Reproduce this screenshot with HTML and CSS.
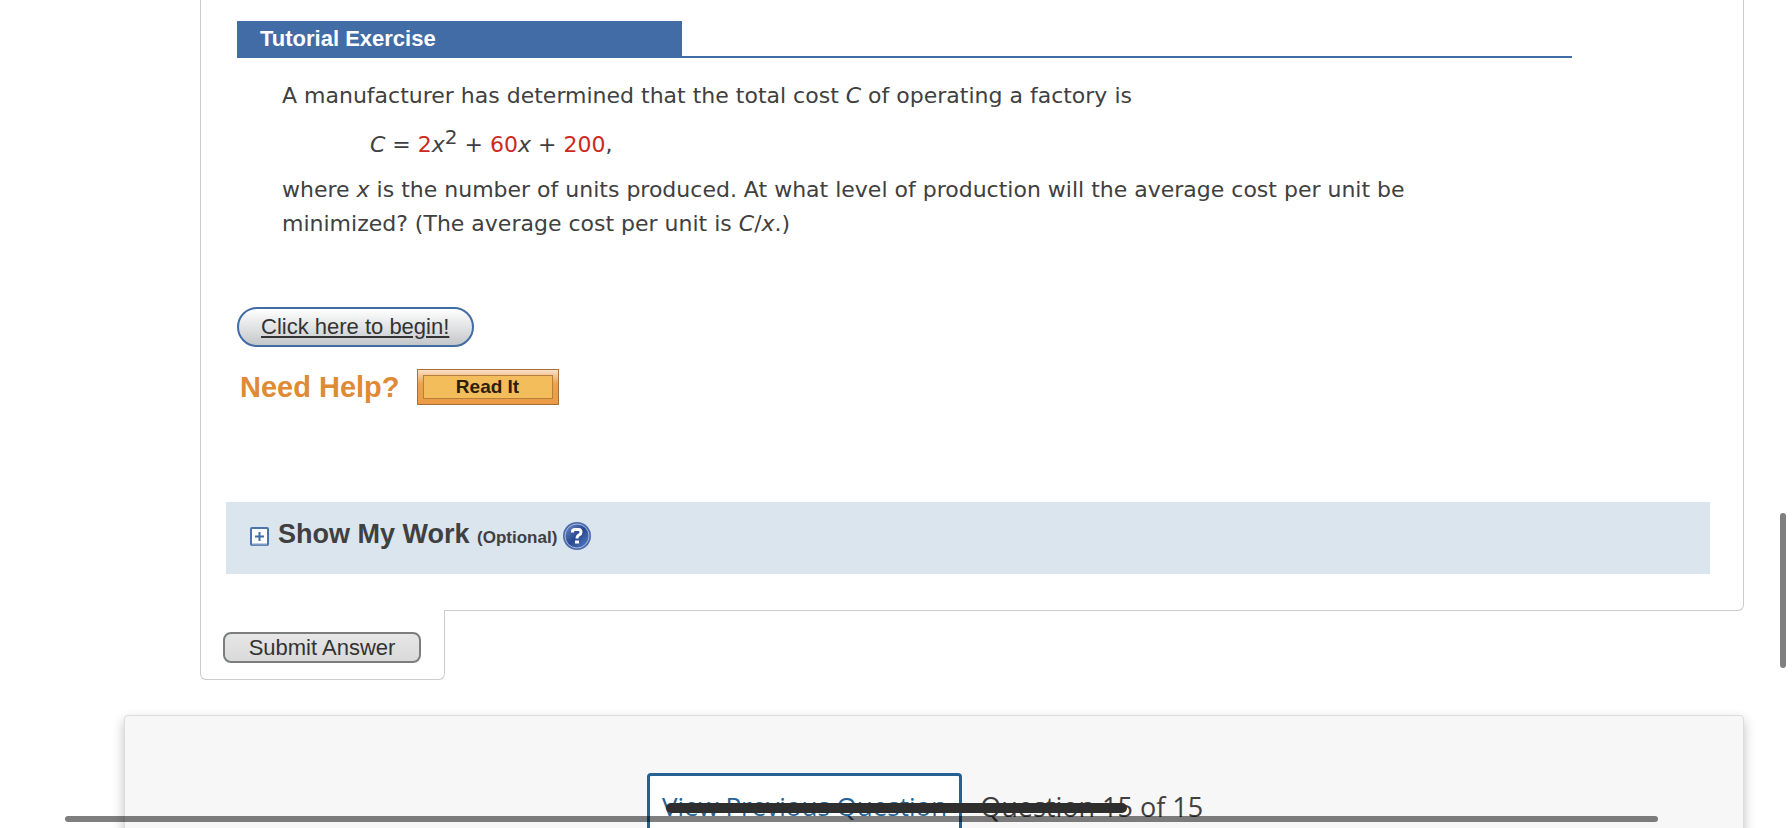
FILE: index.html
```html
<!DOCTYPE html>
<html lang="en">

<head>
    <meta charset="UTF-8">
    <meta name="viewport" content="width=device-width, initial-scale=1.0">
    <title>Tutorial Exercise</title>
    <link rel="stylesheet" href="styles.css">
</head>

<body>
    <main class="question">
        <div class="tutorial">
            <div class="heading">
                <h2 class="tab">Tutorial Exercise</h2>
            </div>
            <div class="problem">
                <p>A manufacturer has determined that the total cost <i>C</i> of operating a factory is</p>
                <p class="equation"><i>C</i> = <span class="red">2</span><i>x</i><sup>2</sup> + <span class="red">60</span><i>x</i> + <span class="red">200</span>,</p>
                <p>where <i>x</i> is the number of units produced. At what level of production will the average cost per unit be minimized? (The average cost per unit is <i>C</i>/<i>x</i>.)</p>
            </div>
            <a href="#begin" class="begin">Click here to begin!</a>
            <div class="help">
                <span class="help-title">Need Help?</span>
                <button type="button" class="read"><span>Read It</span></button>
            </div>
        </div>
        <div class="work">
            <button type="button" class="expand" aria-label="Show My Work">
                <svg width="19" height="19" viewBox="0 0 19 19">
                    <rect x="1" y="1" width="17" height="17" rx="1" fill="#fff" stroke="#4a74aa" stroke-width="2"/>
                    <path d="M2 17.500h15" stroke="#7d9bc2" stroke-width="2"/>
                    <path d="M5 9.500h9M9.500 5v9" stroke="#416ca4" stroke-width="2"/>
                </svg>
            </button>
            <h3>Show My Work <small>(Optional)</small></h3>
            <a href="#about" class="about" aria-label="About Show My Work">
                <svg width="28" height="28" viewBox="0 0 28 28">
                    <defs>
                        <linearGradient id="ball" x1="0" y1="0" x2="1" y2="1">
                            <stop offset="0" stop-color="#7190cc"/>
                            <stop offset=".5" stop-color="#27488f"/>
                            <stop offset="1" stop-color="#5c83c9"/>
                        </linearGradient>
                    </defs>
                    <circle cx="14" cy="14" r="14" fill="#4c6bab"/>
                    <circle cx="14" cy="14" r="12" fill="url(#ball)" stroke="#a6b9dc" stroke-width="1"/>
                    <path d="M9.500 10.500V9.500Q9.500 7.500 12 7.500H15.500Q18 7.500 18 10Q18 12 16 13Q14 14 14 16.500" fill="none" stroke="#fff" stroke-width="3"/>
                    <rect x="12" y="18.500" width="4" height="3" fill="#fff"/>
                </svg>
            </a>
        </div>
    </main>
    <div class="submit">
        <button type="submit">Submit Answer</button>
    </div>
    <nav class="pager">
        <a href="#previous" class="previous">View Previous Question</a>
        <span class="count">Question 15 of 15</span>
        <div class="marker"></div>
    </nav>
    <div class="scroll-y"></div>
    <div class="scroll-x"></div>
</body>

</html>
```

FILE: styles.css
```css
*{
    box-sizing: border-box;
    margin: 0;
    padding: 0;
}
body{
    height: 100vh;
    overflow: hidden;
    background: #fff;
    color: #404040;
    font-family: "Liberation Sans", Arial, sans-serif;
}
.question{
    margin: 0 48px 0 200px;
    padding: 21px 33px 36px 25px;
    border: 1px solid #ccc;
    border-top: 0;
    border-radius: 0 0 6px 0;
}
.tutorial{
    padding: 0 138px 97px 11px;
}
.heading{
    border-bottom: 2px solid #416ca6;
}
.tab{
    width: 33.333%;
    padding-left: 23px;
    background: #416ca6;
    color: #fff;
    font-size: 22px;
    line-height: 35px;
}
.problem{
    padding: 21px 100px 0 45px;
    font-family: Verdana, "DejaVu Sans", sans-serif;
    font-size: 22px;
    line-height: 34px;
}
.equation{
    margin: 15px 0 11px 88px;
}
.equation sup{
    font-size: 20px;
    line-height: 0;
}
.red{
    color: #cc2a20;
}
.begin{
    display: inline-block;
    margin-top: 66px;
    padding: 0 23px 0 22px;
    border: 2px solid #416ca6;
    border-radius: 20px;
    background: linear-gradient(#fff, #c4c7ca);
    color: #333;
    font-size: 22px;
    line-height: 36px;
}
.help{
    display: flex;
    align-items: center;
    gap: 17px;
    margin-top: 22px;
    padding-left: 3px;
}
.help-title{
    color: #df8a34;
    font-size: 29px;
    font-weight: bold;
    line-height: 34px;
}
.read{
    width: 142px;
    padding: 5px;
    border: 1px solid #a87038;
    background: linear-gradient(#fae0c8, #eda24e 40%, #ea9a45);
    color: #2c200c;
    font: bold 19px/22px "Liberation Sans", Arial, sans-serif;
}
.read span{
    display: block;
    border: 1px solid #b5803b;
    background: #f3bd5c;
}
.work{
    display: flex;
    align-items: center;
    height: 72px;
    padding: 0 24px 4px;
    background: #dbe5ee;
}
.work h3{
    margin: 0 6px 0 9px;
    font-size: 27px;
    line-height: 34px;
}
.work small{
    font-size: 17px;
}
.expand{
    display: flex;
    border: 0;
    background: none;
}
.about{
    display: flex;
}
.submit{
    position: relative;
    width: 245px;
    margin: -1px 0 0 200px;
    padding: 22px 23px 16px 22px;
    border: 1px solid #ccc;
    border-top: 0;
    border-radius: 0 0 6px 6px;
    background: #fff;
}
.submit button{
    display: block;
    width: 100%;
    border: 2px solid #7c7e7d;
    border-radius: 8px;
    background: linear-gradient(#e6e6e6, #dadada);
    color: #333;
    font: 22px/27px "Liberation Sans", Arial, sans-serif;
}
.pager{
    position: relative;
    display: flex;
    justify-content: center;
    align-items: center;
    gap: 18px;
    margin: 35px 48px 0 124px;
    padding: 57px 18px 57px 0;
    border: 1px solid #ddd;
    border-radius: 4px;
    background: #f7f7f7;
    box-shadow: 0 5px 12px rgba(0, 0, 0, .25);
    font-family: "Open Sans", sans-serif;
    font-size: 27px;
}
.previous{
    padding: 0 12px;
    border: 3px solid #256293;
    border-radius: 4px;
    background: #fff;
    color: #256293;
    font-size: 26px;
    line-height: 60px;
    text-decoration: none;
}
/* pen stroke over the pager text */
.marker{
    position: absolute;
    top: 87px;
    left: calc(50% - 268px);
    width: 461px;
    height: 10px;
    border-radius: 5px;
    background: #2e2e2e;
}
.scroll-y,
.scroll-x{
    position: fixed;
    border-radius: 3px;
    background: rgba(0, 0, 0, .5);
}
.scroll-y{
    top: 62%;
    right: 6px;
    width: 6px;
    height: 155px;
}
.scroll-x{
    right: 134px;
    bottom: 6px;
    left: 65px;
    height: 6px;
}
```
